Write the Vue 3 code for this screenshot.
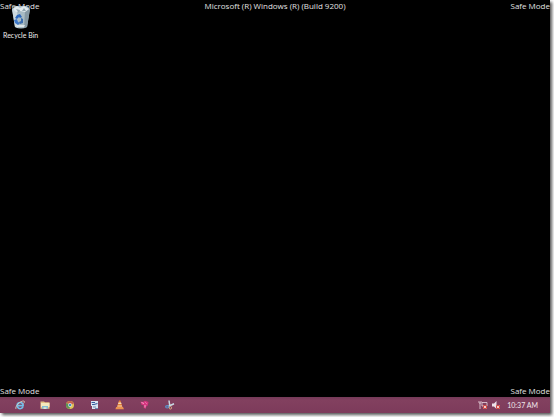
<script setup>
const version = 'Microsoft (R) Windows (R) (Build 9200)'
const mode = 'Safe Mode'
const time = '10:37 AM'
</script>

<template>
  <div class="page">
    <div class="screen">
      <main class="desktop">
        <header class="marks">
          <span>{{ mode }}</span>
          <span class="version">{{ version }}</span>
          <span class="end">{{ mode }}</span>
        </header>
        <button class="shortcut" type="button">
          <svg class="bin" viewBox="0 0 20 24" aria-hidden="true">
            <path d="M1 4 L4 1 L16 1 L19 4 L16 22 Q10 25 4 22 Z" fill="#a9bcc5" />
            <path d="M1 4 L6 6 L7 23 L4 22 Z" fill="#cbd8de" />
            <path d="M14 6 L19 4 L16 22 L13 23 Z" fill="#8699a4" />
            <path d="M2 4 L6 1 L9 3 L13 1 L18 4 L14 7 L9 6 L5 7 Z" fill="#e2eaed" />
            <path d="M5 4 L9 5 L8 8 Z M13 3 L15 6 L11 6 Z" fill="#91a5b0" />
            <path d="M6 10 L9 9 L11 12 L9 13 L8 12 L6 14 L4 13 Z" fill="#2c68bd" />
            <path d="M3 15 L6 14 L7 17 L9 18 L7 20 L4 18 Z" fill="#3c76c7" />
            <path d="M10 13 L12 14 L12 18 L9 19 L8 17 L10 16 Z" fill="#3a6cae" />
            <path d="M5 20 L14 20 L13 22 L6 22 Z" fill="#dce5e8" />
          </svg>
          <span>Recycle Bin</span>
        </button>
        <footer class="marks bottom">
          <span>{{ mode }}</span>
          <span class="end">{{ mode }}</span>
        </footer>
      </main>
      <nav class="taskbar" aria-label="Taskbar">
        <div class="apps">
          <button type="button" aria-label="Internet Explorer">
            <svg viewBox="0 0 10 10">
              <path d="M8 6.8 A3.1 3.1 0 1 1 8.1 4.6 L8.1 5.6 L3 5.6" fill="none" stroke="#74bfe9" stroke-width="1.6" />
              <path d="M1 9 C-.5 7 5 .5 9 1 C10 1.4 9 3 8.5 3.5" fill="none" stroke="#dfd4bb" stroke-width=".8" />
            </svg>
          </button>
          <button type="button" aria-label="File Explorer">
            <svg viewBox="0 0 10 10">
              <path d="M.5 1.5 H4 L5 2.3 H9.5 V8.8 H.5 Z" fill="#e6c485" />
              <path d="M1 3 H9.5 V7 H1 Z" fill="#f4e8bd" />
              <path d="M2 6 H8 V8.8 H2 Z" fill="#86bdd2" />
              <path d="M3.5 7.2 H6.5 V9 H3.5 Z" fill="#d9e5d5" />
            </svg>
          </button>
          <button type="button" aria-label="Chrome">
            <svg viewBox="0 0 10 10">
              <circle cx="5" cy="5" r="4" fill="#dfc455" />
              <path d="M5 5 L1.5 3 A4 4 0 0 1 8.8 3.7 Z" fill="#c9604e" />
              <path d="M5 5 L1.5 3 A4 4 0 0 0 4.5 9 Z" fill="#5b9557" />
              <circle cx="5" cy="5" r="1.9" fill="#eee9dc" />
              <circle cx="5" cy="5" r="1.3" fill="#488dc4" />
            </svg>
          </button>
          <button type="button" aria-label="Document editor">
            <svg viewBox="0 0 10 10">
              <path d="M1 1 H8 V9 H2 V6 H1 Z" fill="#dce4f2" />
              <path d="M1.5 2.5 H5 M2 4.5 H4 L7.5 3.5" fill="none" stroke="#385b9e" stroke-width="1.2" />
              <path d="M3 7 H6 M5 8.5 H8" stroke="#53709d" stroke-width=".8" />
            </svg>
          </button>
          <button type="button" aria-label="VLC media player">
            <svg viewBox="0 0 10 10">
              <path d="M4 .5 H5.4 L7.4 7 H2 Z" fill="#e98335" />
              <path d="M3.5 2.5 H6 L6.5 4 H3 Z M2.5 5.5 H7 L7.2 6.4 H2.3 Z" fill="#f2d6b9" />
              <path d="M1.2 7 H8 L9 9.3 H.4 Z" fill="#eb9250" />
            </svg>
          </button>
          <button type="button" aria-label="Pink application">
            <svg viewBox="0 0 10 10">
              <path d="M.5 1.5 L3 2 L5 .8 L8.5 2 L7.8 5.5 L6.5 6 L5.5 9 L3.5 7.5 L4 5.5 L1.3 4.5 Z" fill="#d73580" />
              <path d="M1.5 2.5 L4 3.5 M5.5 2.5 L6.5 3.5 M5 5 V7.5" stroke="#f6a3c5" stroke-width="1" />
            </svg>
          </button>
          <button type="button" aria-label="Snipping tool">
            <svg viewBox="0 0 10 10">
              <path d="M4 .5 L4.8 6 M9 3.8 L3 6.5" stroke="#c9d8e2" stroke-width="1.5" />
              <ellipse cx="2.2" cy="6.8" rx="1.5" ry="1.2" fill="none" stroke="#5796ce" stroke-width="1.2" />
              <ellipse cx="5.4" cy="7.8" rx="1.2" ry="1.3" fill="none" stroke="#d9a780" />
            </svg>
          </button>
        </div>
        <div class="tray">
          <button type="button" aria-label="Network disconnected">
            <svg viewBox="0 0 10 10">
              <path d="M1 1 V3 H3 V1 M2 3 V9 M4 2.5 H9 V6 H4 Z" fill="none" stroke="#ead8e1" stroke-width=".8" />
              <path d="M5 5 H9 V9 H5 Z" fill="#cf4a45" />
              <path d="M5.8 5.8 L8.2 8.2 M8.2 5.8 L5.8 8.2" stroke="#f5dcd9" stroke-width=".9" />
            </svg>
          </button>
          <button type="button" aria-label="Sound unavailable">
            <svg viewBox="0 0 10 10">
              <path d="M1 3.5 H3 L5.5 1 V9 L3 6.5 H1 Z" fill="#eee3e9" />
              <path d="M5 5 H9 V9 H5 Z" fill="#cf4a45" />
              <path d="M5.8 5.8 L8.2 8.2 M8.2 5.8 L5.8 8.2" stroke="#f5dcd9" stroke-width=".9" />
            </svg>
          </button>
          <time>{{ time }}</time>
        </div>
      </nav>
    </div>
  </div>
</template>

<style>
body {
  margin: 0;
  background: #fff;
}
</style>

<style scoped>
.page {
  box-sizing: border-box;
  display: flex;
  min-height: 100vh;
  padding: 0 4px 4px 0;
  overflow: hidden;
  font-family: "Open Sans", "Noto Sans", sans-serif;
}
.screen {
  display: flex;
  flex: 1;
  flex-direction: column;
  background: #000;
  box-shadow: 2px 2px 3px #555;
}
.desktop {
  display: flex;
  flex: 1;
  flex-direction: column;
}
.marks {
  display: grid;
  grid-template-columns: 1fr auto 1fr;
  color: #e2e2e2;
  font-size: 8px;
  line-height: 12px;
}
.bottom {
  grid-template-columns: 1fr 1fr;
  margin-top: auto;
}
.end {
  text-align: right;
}
button {
  padding: 0;
  border: 0;
  background: none;
  color: inherit;
  font: inherit;
}
.shortcut {
  display: flex;
  flex-direction: column;
  align-items: center;
  align-self: flex-start;
  margin: -7px 0 0 3px;
  color: #eee;
  font-family: Lato, sans-serif;
  font-size: 7px;
  line-height: 12px;
}
.bin {
  width: 20px;
  height: 24px;
}
.taskbar {
  display: flex;
  justify-content: space-between;
  height: 16px;
  padding: 0 12px 0 15px;
  background: linear-gradient(#743a58, #82405f 20%, #7d3b5b);
}
.apps,
.tray {
  display: flex;
  align-items: center;
}
.apps {
  gap: 15px;
}
.tray {
  gap: 3px;
  color: #f0e6eb;
  font-family: Lato, sans-serif;
  font-size: 7px;
  line-height: 12px;
}
.taskbar button,
.taskbar svg {
  display: block;
  width: 10px;
  height: 10px;
}
.tray time {
  margin-left: 3px;
}
</style>
